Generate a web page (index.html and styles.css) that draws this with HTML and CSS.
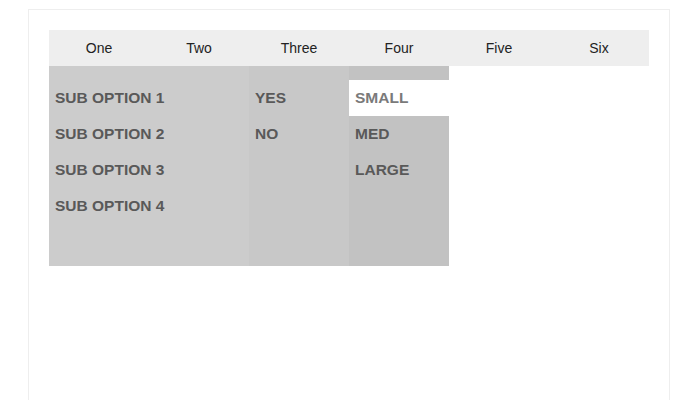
FILE: index.html
```html
<!DOCTYPE html>
<html>
<head>
<meta charset="utf-8">
<link rel="stylesheet" href="styles.css">
</head>
<body>
<div class="box">
  <nav class="nav">
    <div class="nav-item">One</div>
    <div class="nav-item">Two</div>
    <div class="nav-item">Three</div>
    <div class="nav-item">Four</div>
    <div class="nav-item">Five</div>
    <div class="nav-item">Six</div>
  </nav>
  <div class="menu">
    <ul class="col col-1">
      <li>SUB OPTION 1</li>
      <li>SUB OPTION 2</li>
      <li>SUB OPTION 3</li>
      <li>SUB OPTION 4</li>
    </ul>
    <ul class="col col-2">
      <li>YES</li>
      <li>NO</li>
    </ul>
    <ul class="col col-3">
      <li class="active">SMALL</li>
      <li>MED</li>
      <li>LARGE</li>
    </ul>
  </div>
</div>
</body>
</html>
```
FILE: styles.css
```css
html, body {
  margin: 0;
  padding: 0;
  background: #fff;
  font-family: "Liberation Sans", Arial, sans-serif;
}
.box {
  box-sizing: border-box;
  margin: 9px 0 0 28px;
  width: 642px;
  height: 391px;
  padding: 20px;
  border: 1px solid #eeeeee;
  border-bottom: none;
}
.nav {
  display: flex;
  height: 36px;
  background: #eeeeee;
}
.nav-item {
  width: 100px;
  text-align: center;
  line-height: 36px;
  font-size: 14px;
  color: #222;
}
.menu {
  display: flex;
  height: 200px;
}
.col {
  list-style: none;
  margin: 0;
  padding: 14px 0 0 0;
  height: 186px;
}
.col-1 { width: 200px; background: #cccccc; }
.col-2 { width: 100px; background: #c8c8c8; }
.col-3 { width: 100px; background: #c2c2c2; }
.col li {
  height: 36px;
  line-height: 36px;
  padding-left: 6px;
  font-size: 15.5px;
  font-weight: bold;
  color: #595959;
}
.col li.active {
  background: #fff;
  color: #7a7a7a;
}
```
